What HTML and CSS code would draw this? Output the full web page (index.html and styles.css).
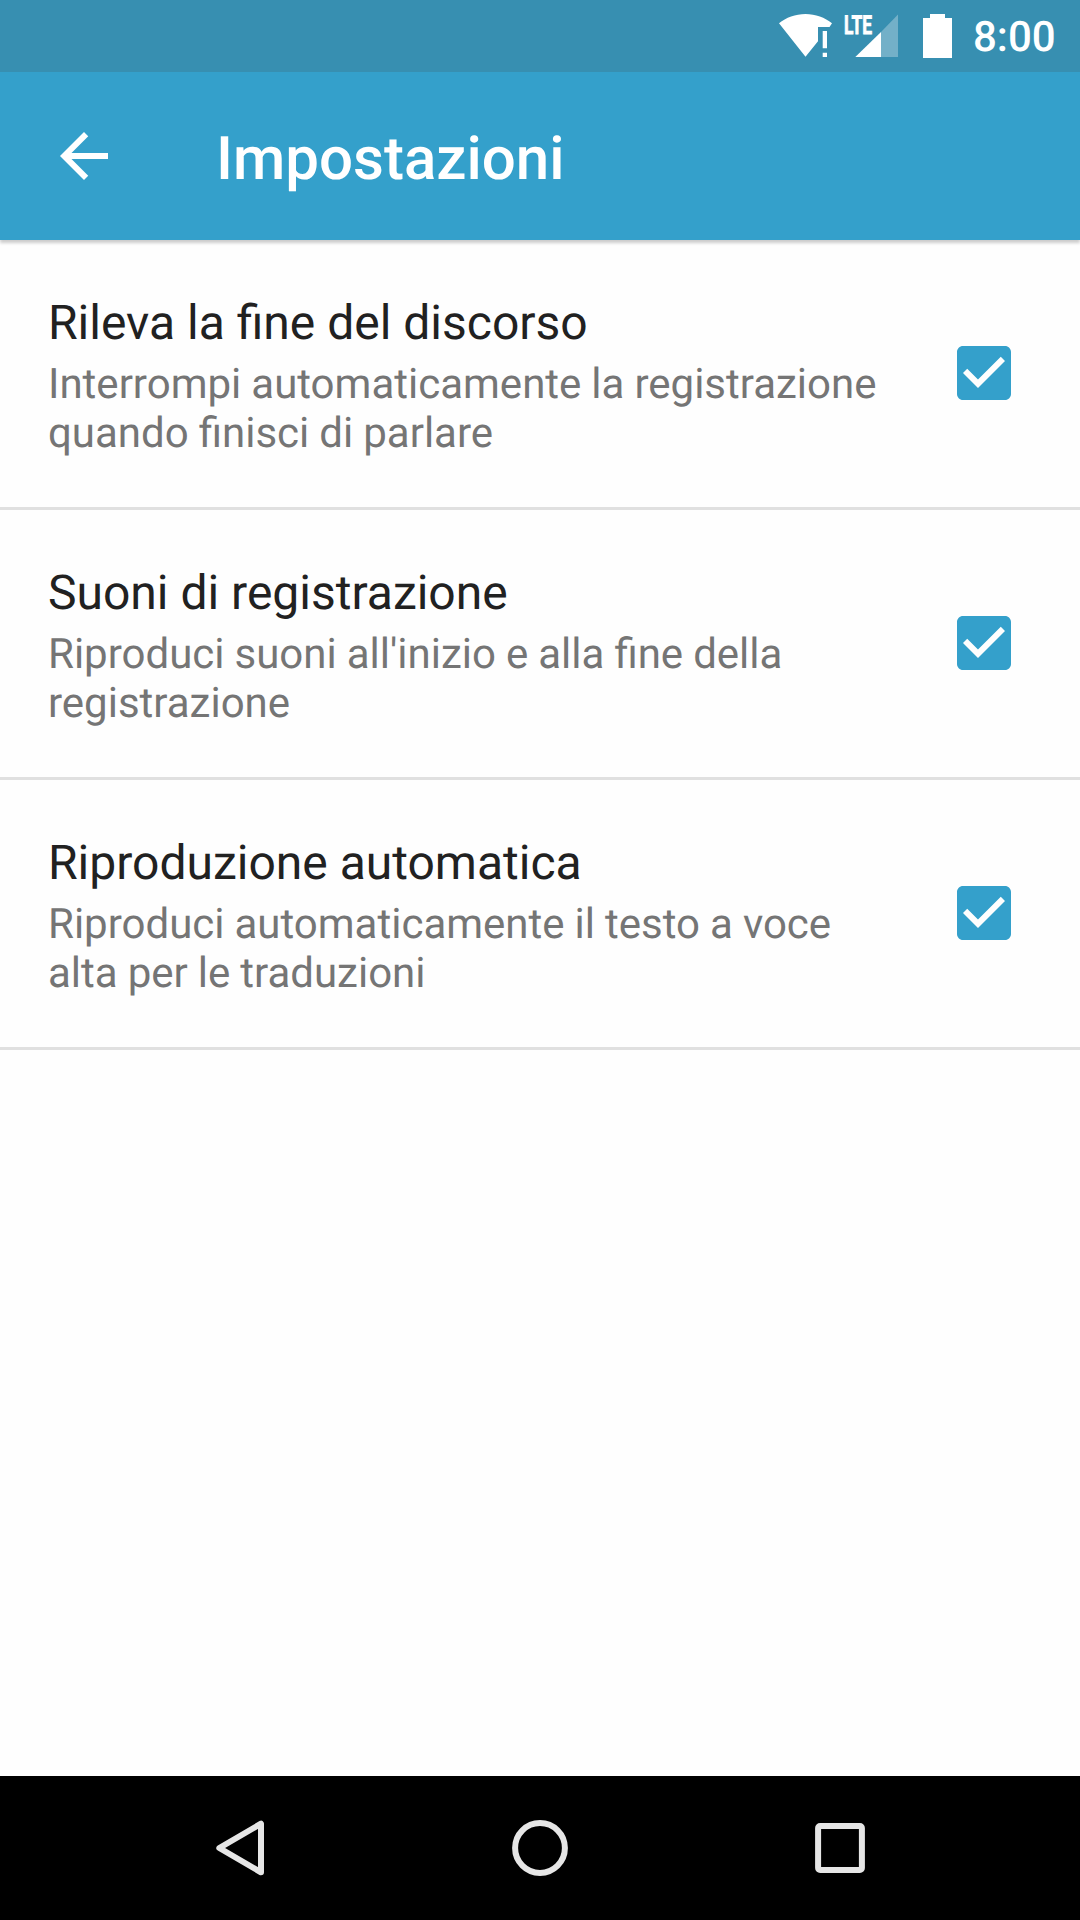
FILE: index.html
```html
<!DOCTYPE html>
<html lang="it">
<head>
    <meta charset="UTF-8">
    <title>Impostazioni</title>
    <link rel="stylesheet" href="styles.css">
</head>
<body>
    <div class="status-bar">
        <svg class="wifi" width="54" height="72" viewBox="779 0 54 72">
            <path d="M779 23.3C786 17.5 795.5 14 805.5 14S825 17.5 832 23.3L829.5 27H818V41.3L805.5 56.7Z"/>
            <path d="M822.7 31h4.3v17.3h-4.3zM822.7 52.7h4.3v4.3h-4.3z"/>
        </svg>
        <svg class="signal" width="54" height="72" viewBox="844 0 54 72">
            <path class="faded" d="M881 32L898 14.5V57H881Z"/>
            <path d="M881 32V57H855.3Z"/>
            <text class="lte" x="844" y="33.7" textLength="28" lengthAdjust="spacingAndGlyphs">LTE</text>
        </svg>
        <svg class="battery" width="29" height="72" viewBox="923 0 29 72">
            <path d="M930 14h15v4h7v40h-29V18h7z"/>
        </svg>
        <span class="clock">8:00</span>
    </div>

    <header>
        <svg class="back" viewBox="0 0 24 24">
            <path d="M20 11H7.83l5.59-5.59L12 4l-8 8 8 8 1.41-1.41L7.83 13H20v-2z"/>
        </svg>
        <h1>Impostazioni</h1>
    </header>

    <main>
        <div class="setting">
            <div class="info">
                <h2 class="title">Rileva la fine del discorso</h2>
                <p class="summary">Interrompi automaticamente la registrazione quando finisci di parlare</p>
            </div>
            <svg class="checkbox" viewBox="0 0 24 24">
                <path d="M19 3H5c-1.11 0-2 .9-2 2v14c0 1.1.89 2 2 2h14c1.11 0 2-.9 2-2V5c0-1.1-.89-2-2-2zm-9 14l-5-5 1.41-1.41L10 14.17l7.59-7.59L19 8l-9 9z"/>
            </svg>
        </div>
        <div class="setting">
            <div class="info">
                <h2 class="title">Suoni di registrazione</h2>
                <p class="summary">Riproduci suoni all'inizio e alla fine della registrazione</p>
            </div>
            <svg class="checkbox" viewBox="0 0 24 24">
                <path d="M19 3H5c-1.11 0-2 .9-2 2v14c0 1.1.89 2 2 2h14c1.11 0 2-.9 2-2V5c0-1.1-.89-2-2-2zm-9 14l-5-5 1.41-1.41L10 14.17l7.59-7.59L19 8l-9 9z"/>
            </svg>
        </div>
        <div class="setting">
            <div class="info">
                <h2 class="title">Riproduzione automatica</h2>
                <p class="summary">Riproduci automaticamente il testo a voce alta per le traduzioni</p>
            </div>
            <svg class="checkbox" viewBox="0 0 24 24">
                <path d="M19 3H5c-1.11 0-2 .9-2 2v14c0 1.1.89 2 2 2h14c1.11 0 2-.9 2-2V5c0-1.1-.89-2-2-2zm-9 14l-5-5 1.41-1.41L10 14.17l7.59-7.59L19 8l-9 9z"/>
            </svg>
        </div>
    </main>

    <nav class="nav-bar">
        <svg viewBox="0 0 72 72"><path d="M15.3 36L57 11.7V60.3Z"/></svg>
        <svg viewBox="0 0 72 72"><circle cx="36" cy="36" r="24.9"/></svg>
        <svg viewBox="0 0 72 72"><rect x="14.1" y="14.1" width="43.8" height="43.8" rx="2"/></svg>
    </nav>
</body>
</html>
```

FILE: styles.css
```css
body {
    margin: 0;
    height: 1920px;
    display: flex;
    flex-direction: column;
    background-color: #fefefe;
    font-family: Roboto, "Noto Sans", sans-serif;
    text-rendering: geometricPrecision;
}

h1, h2, p {
    margin: 0;
}

svg {
    display: block;
    flex-shrink: 0;
}

.status-bar {
    display: flex;
    justify-content: flex-end;
    height: 72px;
    padding-right: 24px;
    background-color: #378fb1;
    color: #fff;
    fill: #fff;
}
.wifi {
    margin-right: 11px;
}
.signal {
    margin-right: 25px;
}
.signal .faded {
    opacity: 0.3;
}
.lte {
    font-size: 26px;
    font-weight: bold;
    stroke: #fff;
    stroke-width: 0.8;
}
.clock {
    width: 83px;
    margin-left: 21px;
    font-size: 42px;
    font-weight: 500;
    line-height: 76px;
    white-space: nowrap;
}

header {
    display: flex;
    align-items: center;
    height: 168px;
    padding-left: 48px;
    background-color: #34a0cb;
    box-shadow: 0 3px 3px rgba(0, 0, 0, 0.2);
    color: #fff;
}
header h1 {
    margin-left: 96px;
    padding-top: 5px;
    font-size: 60px;
    font-weight: 500;
    line-height: 72px;
}
.back {
    width: 72px;
    height: 72px;
    fill: #fff;
}

main {
    flex: 1;
}
.setting {
    display: flex;
    align-items: flex-start;
    justify-content: space-between;
    box-sizing: border-box;
    height: 270px;
    padding: 55px 60px 0 48px;
    border-bottom: 3px solid #e0e0e0;
}
.info {
    width: 850px;
}
.title {
    margin-bottom: 9px;
    font-size: 48px;
    font-weight: 400;
    line-height: 56px;
    color: #212121;
}
.summary {
    font-size: 42px;
    line-height: 49px;
    word-spacing: -0.4px;
    color: #757575;
}
.checkbox {
    width: 72px;
    height: 72px;
    margin-top: 42px;
    fill: #34a0cb;
}

.nav-bar {
    display: flex;
    align-items: center;
    justify-content: center;
    gap: 228px;
    height: 144px;
    background-color: #000;
}
.nav-bar svg {
    width: 72px;
    height: 72px;
    fill: none;
    stroke: #e6e6e6;
    stroke-width: 6;
    stroke-linejoin: round;
}
```
